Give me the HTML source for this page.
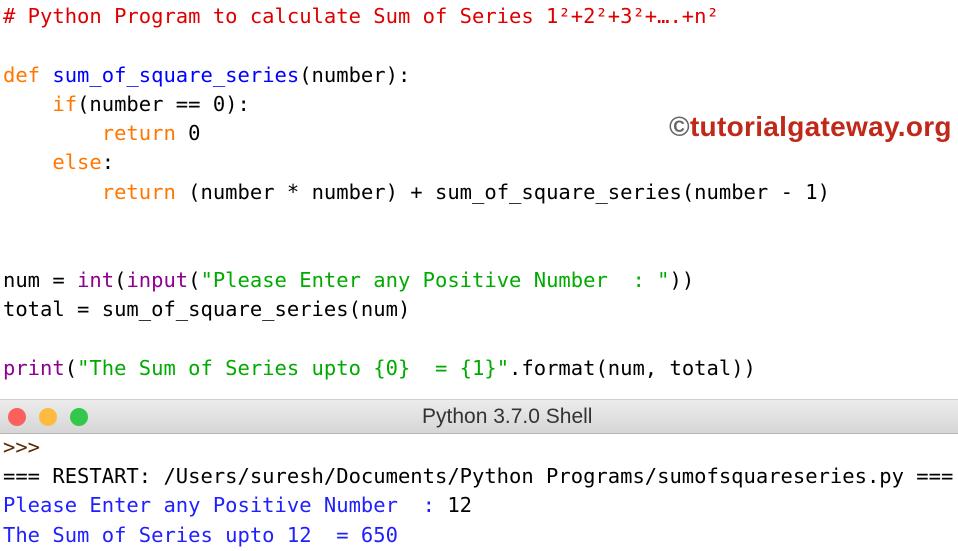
<!DOCTYPE html>
<html><head><meta charset="utf-8"><style>
body{margin:0;width:958px;height:551px;background:#fff;overflow:hidden;position:relative;font-family:"DejaVu Sans Mono","Liberation Mono",monospace;font-size:20.5px;}
.l{position:absolute;left:3px;white-space:pre;line-height:29px;height:29px;}
.c{color:#dd0000}.k{color:#ff7700}.d{color:#0000ff}.b{color:#900090}.s{color:#00aa00}.o{color:#2020ff}
#bar{position:absolute;left:0;top:399px;width:958px;height:33px;background:linear-gradient(#ececec,#d6d6d6);border-top:1px solid #cfcfcf;border-bottom:1px solid #b5b5b5;}
.dot{position:absolute;top:8px;width:18px;height:18px;border-radius:50%}
#tt{position:absolute;left:422px;top:0;white-space:nowrap;line-height:33px;font-family:"Liberation Sans",sans-serif;font-size:21px;color:#333;}
#wm{position:absolute;left:669px;top:111px;font-family:"Liberation Sans",sans-serif;font-weight:bold;font-size:28px;letter-spacing:0.3px;color:#c0281a;}
</style></head><body>
<div class="l c" style="top:2px"># Python Program to calculate Sum of Series 1²+2²+3²+….+n²</div>
<div class="l" style="top:61px"><span class="k">def</span> <span class="d">sum_of_square_series</span>(number):</div>
<div class="l" style="top:90px">    <span class="k">if</span>(number == 0):</div>
<div class="l" style="top:119px">        <span class="k">return</span> 0</div>
<div class="l" style="top:148px">    <span class="k">else</span>:</div>
<div class="l" style="top:178px">        <span class="k">return</span> (number * number) + sum_of_square_series(number - 1)</div>
<div class="l" style="top:266px">num = <span class="b">int</span>(<span class="b">input</span>(<span class="s">"Please Enter any Positive Number  : "</span>))</div>
<div class="l" style="top:295px">total = sum_of_square_series(num)</div>
<div class="l" style="top:354px"><span class="b">print</span>(<span class="s">"The Sum of Series upto {0}  = {1}"</span>.format(num, total))</div>
<div id="wm"><span style="color:#666">©</span>tutorialgateway.org</div>
<div id="bar">
<div class="dot" style="left:8px;background:#fc605c"></div>
<div class="dot" style="left:39px;background:#fdbc40"></div>
<div class="dot" style="left:70px;background:#34c84a"></div>
<div id="tt">Python 3.7.0 Shell</div>
</div>
<div class="l" style="top:433px;color:#5a2a00">&gt;&gt;&gt;</div>
<div class="l" style="top:462px">=== RESTART: /Users/suresh/Documents/Python Programs/sumofsquareseries.py ===</div>
<div class="l" style="top:491px"><span class="o">Please Enter any Positive Number  : </span>12</div>
<div class="l o" style="top:521px">The Sum of Series upto 12  = 650</div>
</body></html>
